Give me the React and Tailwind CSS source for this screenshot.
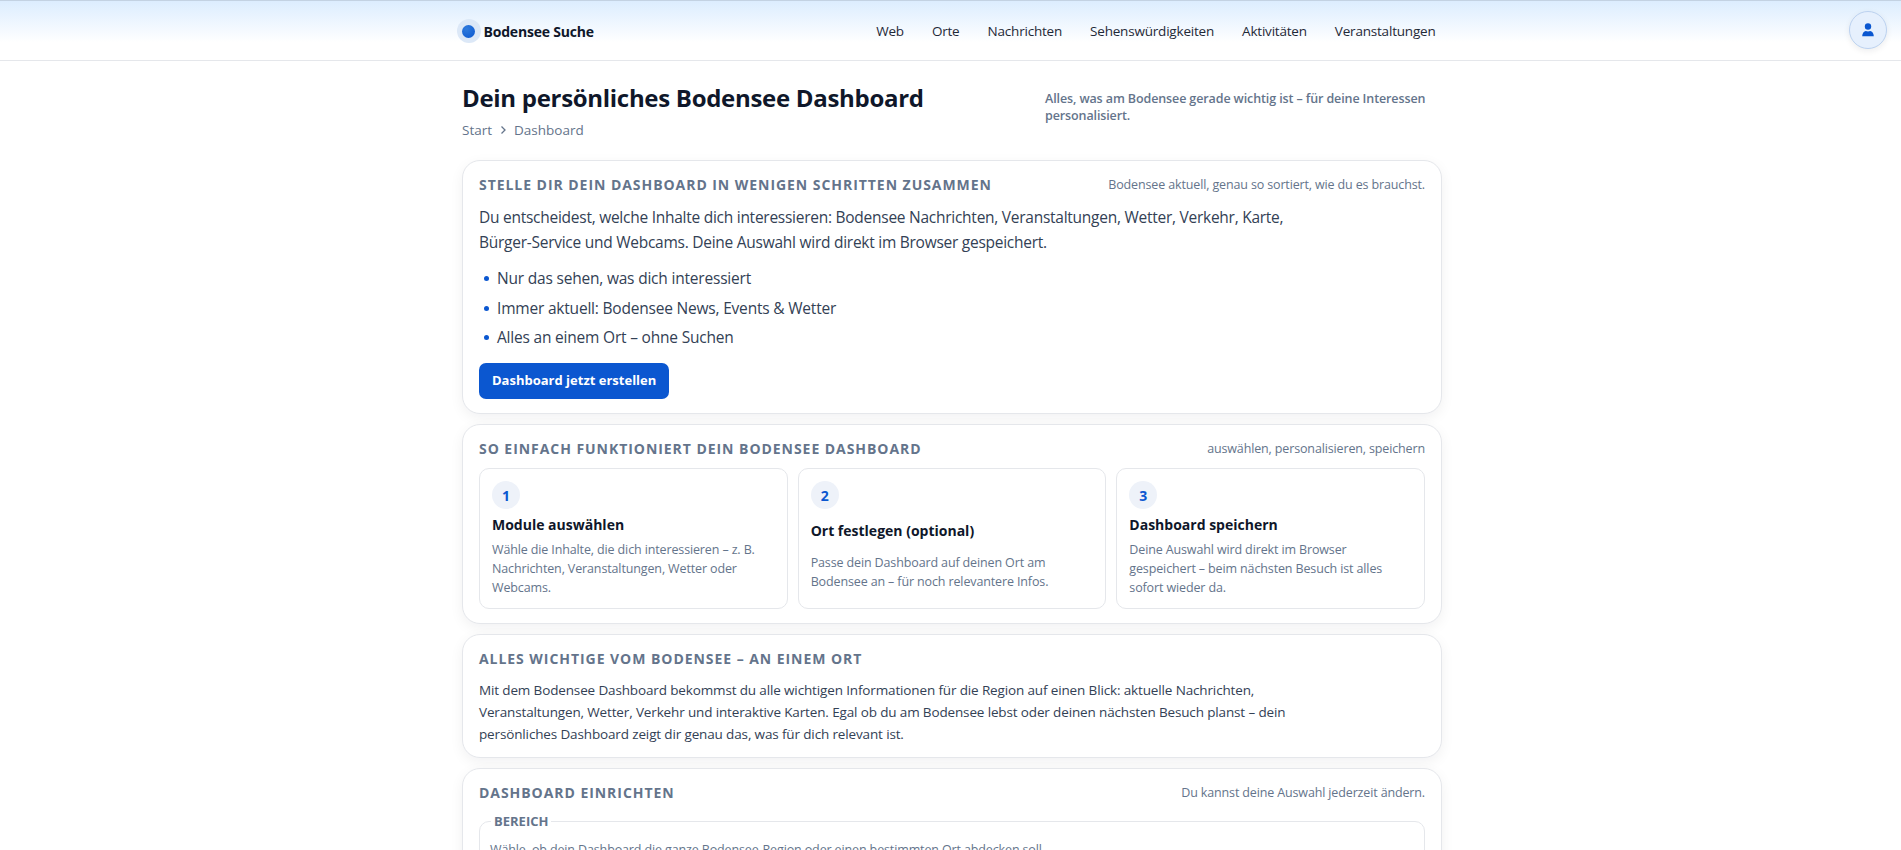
import React from 'react';

const font = { fontFamily: '"Open Sans", "Noto Sans", sans-serif' };

const navItems = ['Web', 'Orte', 'Nachrichten', 'Sehenswürdigkeiten', 'Aktivitäten', 'Veranstaltungen'];

const steps = [
    { n: 1, title: 'Module auswählen', text: 'Wähle die Inhalte, die dich interessieren – z. B. Nachrichten, Veranstaltungen, Wetter oder Webcams.' },
    { n: 2, title: 'Ort festlegen (optional)', text: 'Passe dein Dashboard auf deinen Ort am Bodensee an – für noch relevantere Infos.' },
    { n: 3, title: 'Dashboard speichern', text: 'Deine Auswahl wird direkt im Browser gespeichert – beim nächsten Besuch ist alles sofort wieder da.' },
];

const bullets = [
    'Nur das sehen, was dich interessiert',
    'Immer aktuell: Bodensee News, Events & Wetter',
    'Alles an einem Ort – ohne Suchen',
];

const Card = ({ title, note, children }) => (
    <section className="rounded-[18px] border border-[#e5e7eb] bg-white px-4 pt-[14px] pb-3 shadow-[0_4px_14px_rgba(15,23,42,0.06)]">
        <div className="flex items-center justify-between">
            <h2 className="text-[14px] leading-5 font-bold uppercase tracking-[0.95px] text-[#64748b]">{title}</h2>
            {note && <span className="text-[12.5px] leading-5 tracking-[-0.14px] text-[#64748b]">{note}</span>}
        </div>
        {children}
    </section>
);

const Header = () => (
    <header className="relative h-[61px] border-t border-b border-t-[#c3d2e2] border-b-[#e5e7eb] bg-gradient-to-b from-[#dcedfe] to-white to-70%">
        <div className="mx-auto flex h-[59px] w-[990px] items-center justify-between pt-[1px] pl-[1px] pr-[10px]">
            <div className="flex items-center gap-[3px]">
                <span className="flex h-6 w-6 items-center justify-center rounded-full bg-[#dce8f7]">
                    <span className="h-[13px] w-[13px] rounded-full bg-[radial-gradient(circle_at_35%_30%,#2f7bdc,#0b57d0)]" />
                </span>
                <span className="text-[14px] font-bold tracking-[-0.2px] text-[#0f172a]">Bodensee Suche</span>
            </div>
            <nav className="flex gap-[28px] text-[13.5px] tracking-[-0.2px] text-[#1f2937]">
                {navItems.map((item) => <a key={item}>{item}</a>)}
            </nav>
        </div>
        <button className="absolute right-[14px] top-[10px] flex h-[38px] w-[38px] items-center justify-center rounded-full border border-[#bcd2f0] bg-[#e6f0fd] shadow-[0_2px_6px_rgba(15,23,42,0.08)]">
            <svg width="14" height="14" viewBox="0 0 14 14" fill="#0b57d0">
                <circle cx="7" cy="3.5" r="3.2" />
                <path d="M1.2 13.2c0-3 1.8-5 3.6-5.2 1.4.6 3 .6 4.4 0 1.8.2 3.6 2.2 3.6 5.2z" />
            </svg>
        </button>
    </header>
);

export default function App() {
    return (
        <div className="h-[850px] overflow-hidden bg-white" style={font}>
            <Header />
            <main className="mx-auto w-[983px] pl-[3px]">
                <div className="flex items-start justify-between pt-5">
                    <div>
                        <h1 className="text-[24px] leading-[34px] font-bold tracking-[-0.3px] text-[#0f172a]">Dein persönliches Bodensee Dashboard</h1>
                        <div className="mt-[5px] flex items-center text-[13.5px] leading-5 text-[#64748b]">
                            <span>Start</span>
                            <svg className="mx-[6px]" width="10" height="10" viewBox="0 0 10 10" fill="none" stroke="#64748b" strokeWidth="1.3">
                                <path d="M3.5 1.5 7 5 3.5 8.5" />
                            </svg>
                            <span>Dashboard</span>
                        </div>
                    </div>
                    <p className="mt-[9px] w-[397px] text-[12.5px] leading-[17px] font-semibold tracking-[-0.11px] text-[#64748b]">
                        Alles, was am Bodensee gerade wichtig ist – für deine Interessen personalisiert.
                    </p>
                </div>

                <div className="mt-5 flex flex-col gap-[10px]">
                    <Card title="Stelle dir dein Dashboard in wenigen Schritten zusammen" note="Bodensee aktuell, genau so sortiert, wie du es brauchst.">
                        <p className="mt-[10px] max-w-[830px] text-[15.5px] leading-[25px] tracking-[-0.26px] text-[#334155]">
                            Du entscheidest, welche Inhalte dich interessieren: Bodensee Nachrichten, Veranstaltungen, Wetter, Verkehr, Karte, Bürger-Service und Webcams. Deine Auswahl wird direkt im Browser gespeichert.
                        </p>
                        <ul className="mt-[11px] flex flex-col gap-[4.5px]">
                            {bullets.map((b) => (
                                <li key={b} className="flex items-center gap-2 pl-[5px] text-[15.5px] leading-[25px] tracking-[-0.2px] text-[#334155]">
                                    <span className="h-[5px] w-[5px] rounded-full bg-[#0b57d0]" />
                                    {b}
                                </li>
                            ))}
                        </ul>
                        <button className="mt-[13px] mb-[2px] block h-9 rounded-[7px] bg-[#0b57d0] px-[13px] text-[13px] font-bold text-white">
                            Dashboard jetzt erstellen
                        </button>
                    </Card>

                    <Card title="So einfach funktioniert dein Bodensee Dashboard" note="auswählen, personalisieren, speichern">
                        <div className="mt-[9px] mb-[2px] grid grid-cols-3 gap-[10px]">
                            {steps.map((s) => (
                                <div key={s.n} className="flex flex-col rounded-[10px] border border-[#e5e7eb] px-3 pt-3 pb-[11px]">
                                    <span className="flex h-7 w-7 shrink-0 items-center justify-center rounded-full bg-[#eef2f9] text-[14px] font-bold text-[#0b57d0]">{s.n}</span>
                                    <div className="mt-[6px] flex flex-1 flex-col justify-evenly">
                                        <h3 className="text-[14px] leading-5 font-bold text-[#0f172a]">{s.title}</h3>
                                        <p className="mt-[5px] text-[12.5px] leading-[19px] tracking-[-0.13px] text-[#64748b]">{s.text}</p>
                                    </div>
                                </div>
                            ))}
                        </div>
                    </Card>

                    <Card title="Alles Wichtige vom Bodensee – an einem Ort">
                        <p className="mt-[10px] max-w-[820px] text-[13.5px] leading-[22px] tracking-[-0.14px] text-[#334155]">
                            Mit dem Bodensee Dashboard bekommst du alle wichtigen Informationen für die Region auf einen Blick: aktuelle Nachrichten, Veranstaltungen, Wetter, Verkehr und interaktive Karten. Egal ob du am Bodensee lebst oder deinen nächsten Besuch planst – dein persönliches Dashboard zeigt dir genau das, was für dich relevant ist.
                        </p>
                    </Card>

                    <Card title="Dashboard einrichten" note="Du kannst deine Auswahl jederzeit ändern.">
                        <fieldset className="mt-[9px] rounded-[10px] border border-[#e5e7eb] px-[10px] pb-3">
                            <legend className="ml-[1px] px-[3px] text-[13px] font-bold uppercase text-[#64748b]">Bereich</legend>
                            <p className="mt-2 text-[12.5px] leading-[19px] tracking-[-0.13px] text-[#64748b]">Wähle, ob dein Dashboard die ganze Bodensee-Region oder einen bestimmten Ort abdecken soll.</p>
                        </fieldset>
                    </Card>
                </div>
            </main>
        </div>
    );
}
